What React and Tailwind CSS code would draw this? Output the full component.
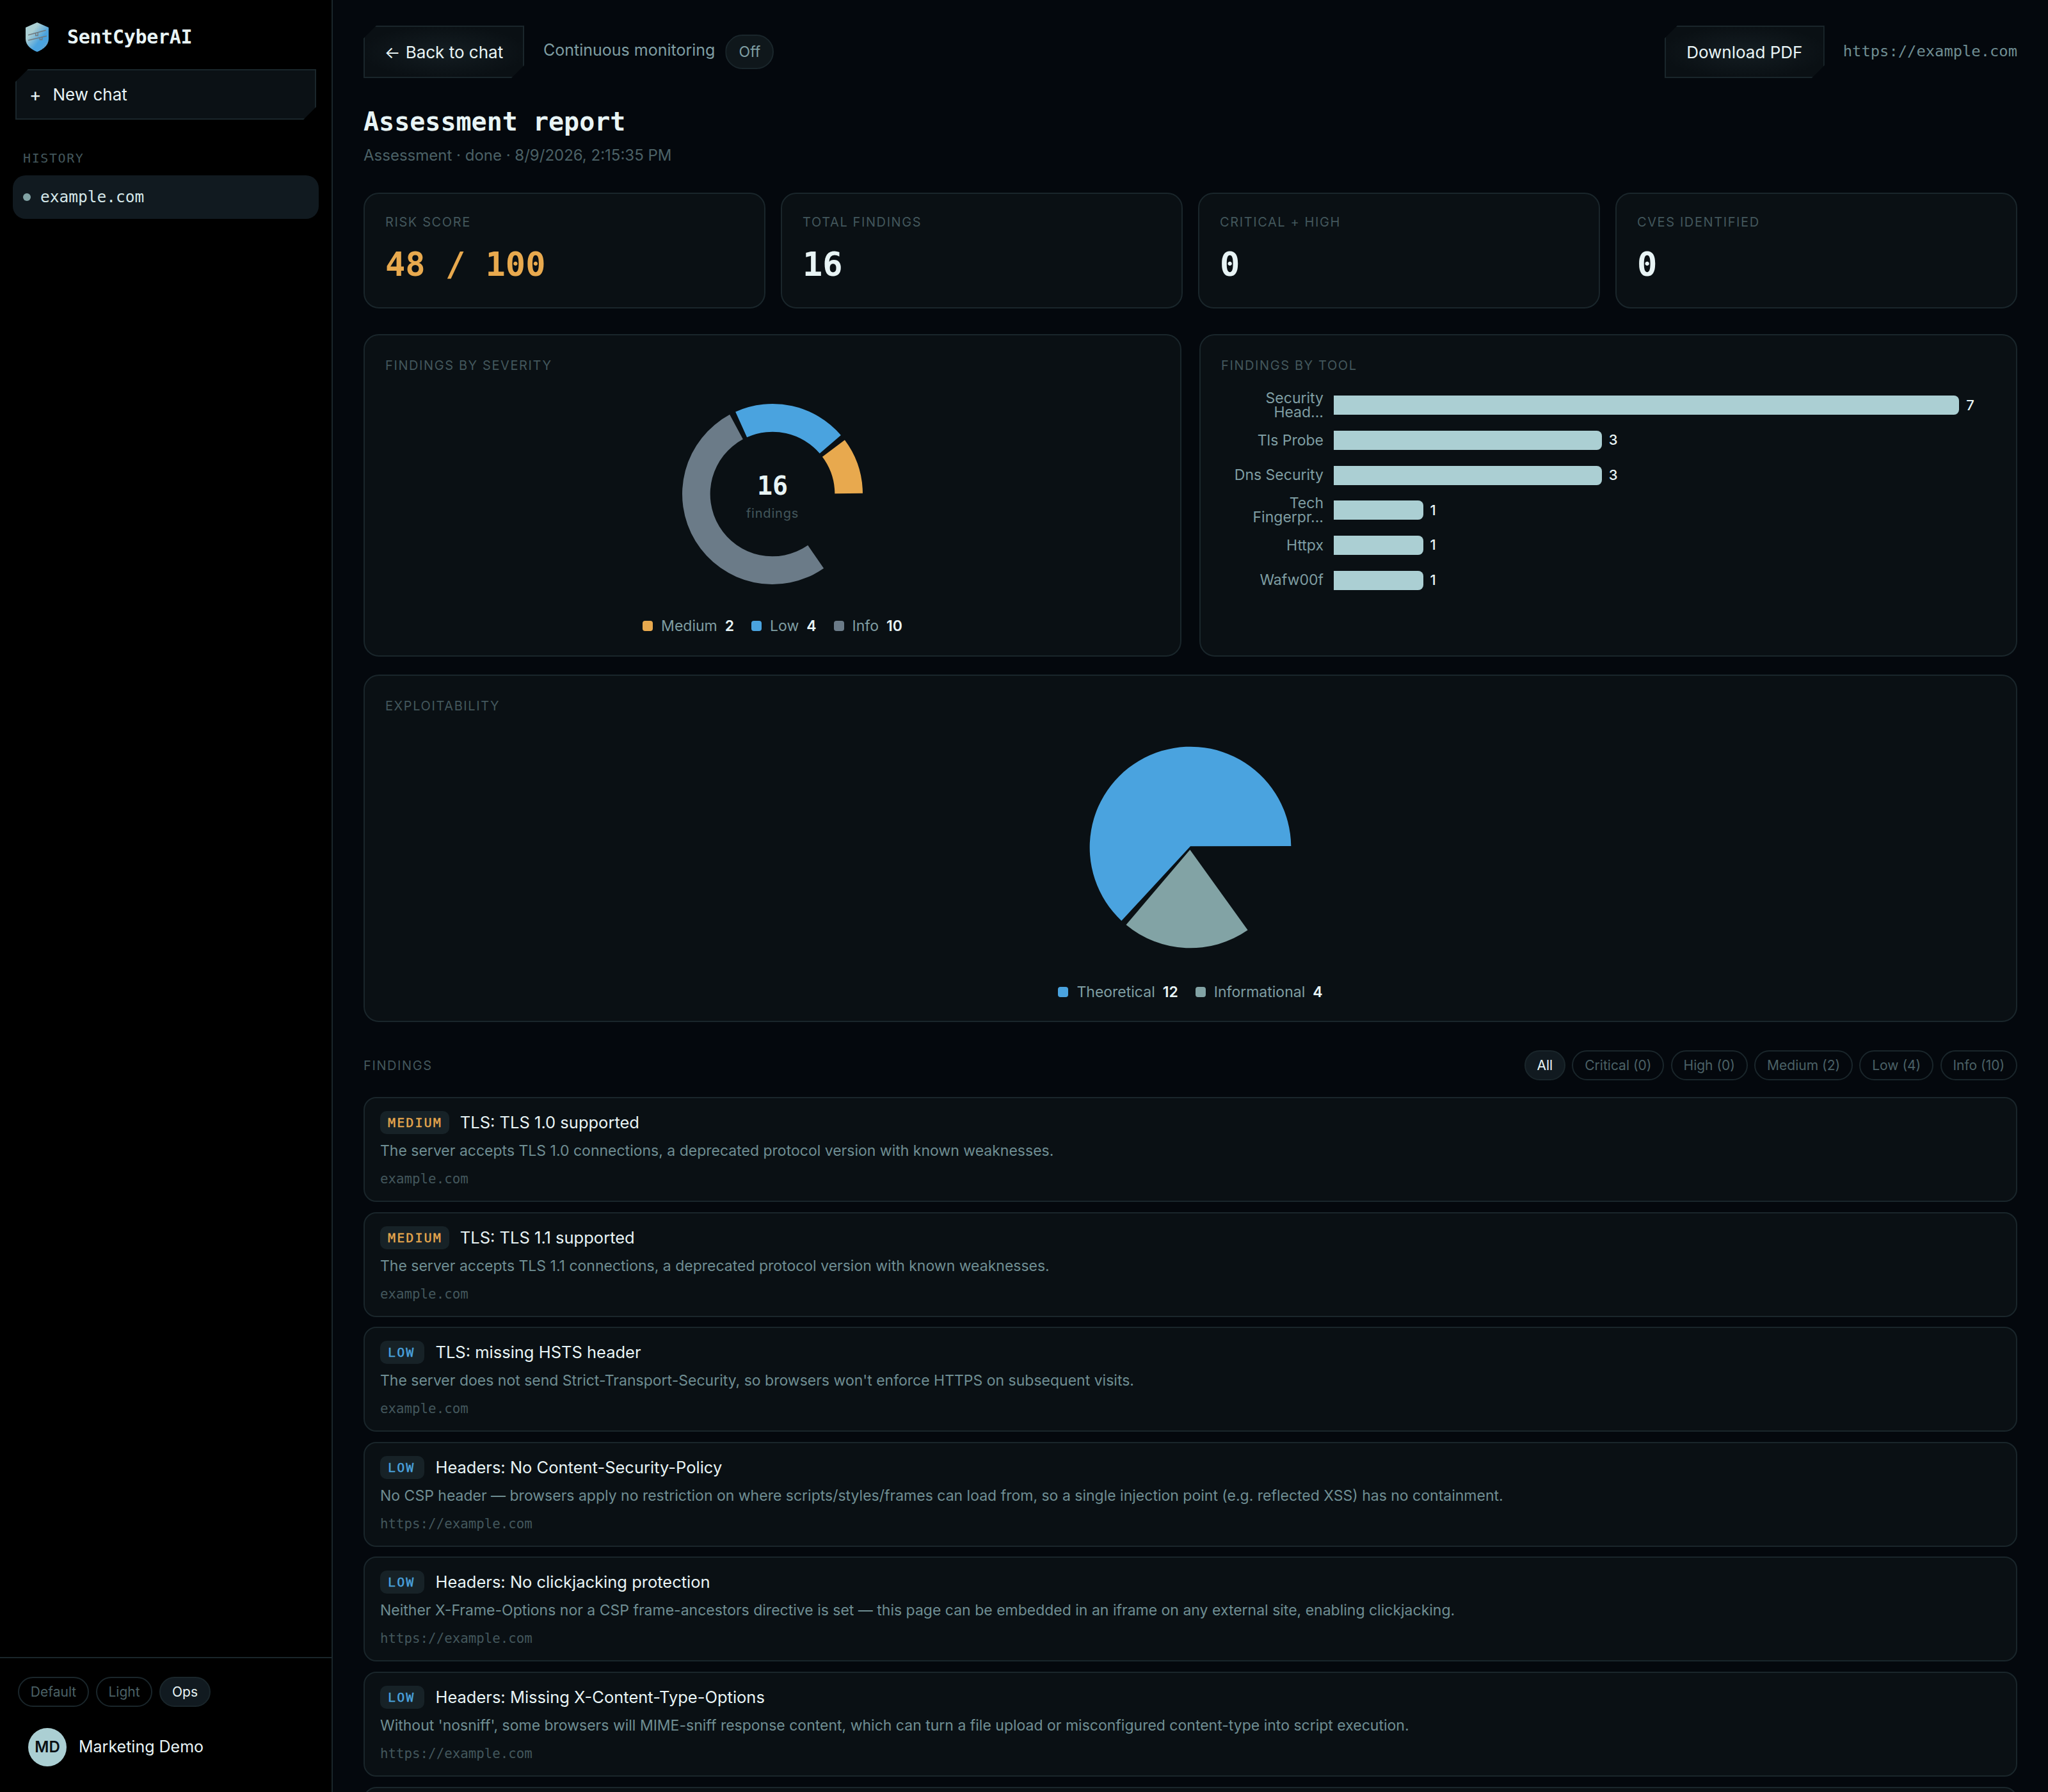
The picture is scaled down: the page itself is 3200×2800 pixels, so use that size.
const MONO = 'font-["DejaVu_Sans_Mono",monospace]'

const cutCorners =
  '[clip-path:polygon(20px_0,100%_0,100%_calc(100%-20px),calc(100%-20px)_100%,0_100%,0_20px)]'

const stats = [
  { label: 'Risk score', value: '48 / 100', color: 'text-[#e8a94e]' },
  { label: 'Total findings', value: '16', color: 'text-[#e8f4f5]' },
  { label: 'Critical + High', value: '0', color: 'text-[#e8f4f5]' },
  { label: 'CVEs identified', value: '0', color: 'text-[#e8f4f5]' },
]

const tools = [
  { name: 'Security Head...', count: 7 },
  { name: 'Tls Probe', count: 3 },
  { name: 'Dns Security', count: 3 },
  { name: 'Tech Fingerpr...', count: 1 },
  { name: 'Httpx', count: 1 },
  { name: 'Wafw00f', count: 1 },
]

const filters = ['All', 'Critical (0)', 'High (0)', 'Medium (2)', 'Low (4)', 'Info (10)']

const findings = [
  {
    severity: 'Medium',
    title: 'TLS: TLS 1.0 supported',
    body: 'The server accepts TLS 1.0 connections, a deprecated protocol version with known weaknesses.',
    target: 'example.com',
  },
  {
    severity: 'Medium',
    title: 'TLS: TLS 1.1 supported',
    body: 'The server accepts TLS 1.1 connections, a deprecated protocol version with known weaknesses.',
    target: 'example.com',
  },
  {
    severity: 'Low',
    title: 'TLS: missing HSTS header',
    body: "The server does not send Strict-Transport-Security, so browsers won't enforce HTTPS on subsequent visits.",
    target: 'example.com',
  },
  {
    severity: 'Low',
    title: 'Headers: No Content-Security-Policy',
    body: 'No CSP header — browsers apply no restriction on where scripts/styles/frames can load from, so a single injection point (e.g. reflected XSS) has no containment.',
    target: 'https://example.com',
  },
  {
    severity: 'Low',
    title: 'Headers: No clickjacking protection',
    body: 'Neither X-Frame-Options nor a CSP frame-ancestors directive is set — this page can be embedded in an iframe on any external site, enabling clickjacking.',
    target: 'https://example.com',
  },
  {
    severity: 'Low',
    title: 'Headers: Missing X-Content-Type-Options',
    body: "Without 'nosniff', some browsers will MIME-sniff response content, which can turn a file upload or misconfigured content-type into script execution.",
    target: 'https://example.com',
  },
]

// angle in degrees, counter-clockwise from 3 o'clock
function polar(cx, cy, r, deg) {
  const rad = (deg * Math.PI) / 180
  return `${(cx + r * Math.cos(rad)).toFixed(2)} ${(cy - r * Math.sin(rad)).toFixed(2)}`
}

function ringPath(cx, cy, outer, inner, from, to) {
  const large = to - from > 180 ? 1 : 0
  return [
    `M${polar(cx, cy, outer, from)}`,
    `A${outer} ${outer} 0 ${large} 0 ${polar(cx, cy, outer, to)}`,
    `L${polar(cx, cy, inner, to)}`,
    `A${inner} ${inner} 0 ${large} 1 ${polar(cx, cy, inner, from)}`,
    'Z',
  ].join('')
}

function piePath(cx, cy, r, from, to, apexX, apexY) {
  const large = to - from > 180 ? 1 : 0
  return `M${apexX} ${apexY}L${polar(cx, cy, r, from)}A${r} ${r} 0 ${large} 0 ${polar(cx, cy, r, to)}Z`
}

function ShieldLogo() {
  return (
    <svg width="36" height="46" viewBox="0 0 36 46" className="shrink-0">
      <defs>
        <linearGradient id="shield-fill" x1="0" y1="0" x2="1" y2="1">
          <stop offset="0.3" stopColor="#abcfd3" />
          <stop offset="0.62" stopColor="#4aa3df" />
        </linearGradient>
        <pattern id="shield-dots" width="3" height="3" patternUnits="userSpaceOnUse">
          <rect width="1.4" height="1.4" fill="#9aa7ad" />
        </pattern>
        <clipPath id="shield-clip">
          <path d="M18 0L36 8V26C36 36 26 43 18 46C10 43 0 36 0 26V8Z" />
        </clipPath>
      </defs>
      <path d="M18 0L36 8V26C36 36 26 43 18 46C10 43 0 36 0 26V8Z" fill="url(#shield-fill)" />
      <g clipPath="url(#shield-clip)">
        <path d="M20 46L36 26V46Z" fill="url(#shield-dots)" opacity="0.8" />
        <path d="M18 4L36 4V14L4 34V28Z" fill="url(#shield-dots)" opacity="0.25" />
      </g>
      <path
        d="M4 19.7L31.7 12.3M4 28L33 21.3M15.7 16.5V20.5H19.2V15.5M22.3 23V27H25.8V22"
        fill="none"
        stroke="#6f7a80"
        strokeWidth="1.4"
      />
    </svg>
  )
}

function Sidebar() {
  return (
    <aside className="flex h-full w-[520px] shrink-0 flex-col border-r-2 border-[#1a262b] bg-black">
      <div className="mt-[35px] flex h-[46px] items-center gap-[29px] pl-[40px]">
        <ShieldLogo />
        <span className={`${MONO} text-[30px] font-bold leading-none tracking-[-0.3px] text-[#e8f4f5]`}>
          SentCyberAI
        </span>
      </div>
      <div className={`ml-[24px] mt-[27px] flex h-[79px] w-[470px] items-center gap-[18px] border-2 border-[#1a262b] bg-[#0b1115] pl-[20px] text-[26px] text-[#e8f4f5] ${cutCorners}`}>
        <span className="text-[28px] leading-none">+</span>
        <span>New chat</span>
      </div>
      <div className={`${MONO} ml-[36px] mt-[48px] text-[20px] leading-[24px] tracking-[1.6px] text-[#43575c]`}>
        HISTORY
      </div>
      <div className="ml-[20px] mt-[15px] flex h-[68px] w-[478px] items-center gap-[15px] rounded-[20px] bg-[#111a20] pl-[16px]">
        <span className="h-[12px] w-[12px] rounded-full bg-[#82a3a5]" />
        <span className={`${MONO} text-[24.5px] text-[#d4e6e8]`}>example.com</span>
      </div>
      <div className="mt-auto border-t-2 border-[#1a262b] pb-[40px] pl-[28px] pt-[29px]">
        <div className="flex gap-[11px]">
          <span className="flex h-[47px] w-[111px] items-center justify-center rounded-full border-2 border-[#1a262b] text-[21px] text-[#4b6166]">
            Default
          </span>
          <span className="flex h-[47px] w-[88px] items-center justify-center rounded-full border-2 border-[#1a262b] text-[21px] text-[#4b6166]">
            Light
          </span>
          <span className="flex h-[47px] w-[80px] items-center justify-center rounded-full border-2 border-[#1a262b] bg-[#111a20] text-[21px] text-[#e8f4f5]">
            Ops
          </span>
        </div>
        <div className="ml-[16px] mt-[33px] flex items-center gap-[19px]">
          <span className="flex h-[60px] w-[60px] items-center justify-center rounded-full bg-[#abcfd3] text-[24px] font-semibold text-[#0a1014]">
            MD
          </span>
          <span className="text-[25px] text-[#e8f4f5]">Marketing Demo</span>
        </div>
      </div>
    </aside>
  )
}

function Label({ children }) {
  return (
    <div className="text-[20px] uppercase leading-[28px] tracking-[1.6px] text-[#43575c]">{children}</div>
  )
}

function LegendItem({ color, label, count }) {
  return (
    <div className="flex items-center">
      <span className={`mr-[13px] h-[16px] w-[16px] rounded-[4px] ${color}`} />
      <span className="mr-[12px] text-[#7f9ea3]">{label}</span>
      <span className="font-semibold text-[#e8f4f5]">{count}</span>
    </div>
  )
}

function SeverityCard() {
  return (
    <section className="h-[504px] rounded-[24px] border-2 border-[#1a262b] bg-[#0a1014] px-[32px] pt-[33px]">
      <Label>Findings by severity</Label>
      <div className="relative mx-auto mt-[37px] h-[300px] w-[300px]">
        <svg width="300" height="300" viewBox="291 95 900 900">
          <path d={ringPath(741, 545, 423, 292, 0.5, 36.8)} fill="#e8a94e" />
          <path d={ringPath(741, 545, 423, 292, 40.7, 114.2)} fill="#4aa3df" />
          <path d={ringPath(741, 545, 423, 292, 118.3, 304.6)} fill="#6b7b88" />
        </svg>
        <div className="absolute inset-x-0 top-[114px] flex flex-col items-center">
          <span className={`${MONO} text-[40px] font-bold leading-[46px] text-[#e8f4f5]`}>16</span>
          <span className="mt-[7px] text-[20px] leading-[26px] tracking-[0.8px] text-[#43575c]">findings</span>
        </div>
      </div>
      <div className="mt-[40px] flex justify-center gap-[27px] text-[23px] leading-[32px]">
        <LegendItem color="bg-[#e8a94e]" label="Medium" count="2" />
        <LegendItem color="bg-[#4aa3df]" label="Low" count="4" />
        <LegendItem color="bg-[#6b7b88]" label="Info" count="10" />
      </div>
    </section>
  )
}

function ToolCard() {
  return (
    <section className="h-[504px] rounded-[24px] border-2 border-[#1a262b] bg-[#0a1014] px-[32px] pt-[33px]">
      <Label>Findings by tool</Label>
      <div className="mt-[21px] flex flex-col">
        {tools.map((tool) => (
          <div key={tool.name} className="flex h-[54.67px] items-center gap-[16px]">
            <div className="w-[160px] shrink-0 text-right text-[23px] leading-[22.5px] text-[#7f9ea3]">
              {tool.name}
            </div>
            <div
              className="h-[30px] rounded-r-[8px] bg-[#abcfd3]"
              style={{ width: `${tool.count * 139.6}px` }}
            />
            <span className="-ml-[5px] text-[22px] font-medium text-[#e8f4f5]">{tool.count}</span>
          </div>
        ))}
      </div>
    </section>
  )
}

function ExploitabilityCard() {
  return (
    <section className="mt-[28px] h-[543px] rounded-[24px] border-2 border-[#1a262b] bg-[#0a1014] px-[32px] pt-[33px]">
      <Label>Exploitability</Label>
      <svg width="320" height="320" viewBox="180 71.5 960 960" className="mx-auto mt-[47px] block">
        <path d={piePath(660, 551.5, 472, 0.7, 226.8, 660, 546)} fill="#4aa3df" />
        <path d={piePath(660, 551.5, 472, 230.3, 304.7, 658, 563)} fill="#82a3a5" />
      </svg>
      <div className="mt-[50px] flex justify-center gap-[27px] text-[23px] leading-[32px]">
        <LegendItem color="bg-[#4aa3df]" label="Theoretical" count="12" />
        <LegendItem color="bg-[#82a3a5]" label="Informational" count="4" />
      </div>
    </section>
  )
}

function SeverityBadge({ severity }) {
  const tone = severity === 'Medium' ? 'pr-[11px] text-[#e8a94e]' : 'pr-[15px] text-[#4aa3df]'
  return (
    <span className={`${MONO} flex h-[36px] items-center rounded-[10px] bg-[#172227] pl-[12px] text-[20px] uppercase leading-none tracking-[2.1px] [-webkit-text-stroke:0.4px_currentColor] ${tone}`}>
      {severity}
    </span>
  )
}

function FindingCard({ finding }) {
  return (
    <article className="h-[164px] shrink-0 rounded-[20px] border-2 border-[#1a262b] bg-[#0a1014] px-[24px] pt-[20px]">
      <div className="flex items-center gap-[17px]">
        <SeverityBadge severity={finding.severity} />
        <h3 className="text-[25.5px] font-normal leading-[36px] text-[#e8f4f5]">{finding.title}</h3>
      </div>
      <p className="mt-[10px] text-[23px] leading-[32px] text-[#6f8e93]">{finding.body}</p>
      <div className={`${MONO} mt-[15px] text-[20.8px] leading-[26px] text-[#43575c]`}>{finding.target}</div>
    </article>
  )
}

function App() {
  return (
    <div className="flex h-screen overflow-hidden bg-[#04080d] font-['Inter',sans-serif]">
      <Sidebar />
      <main className="min-w-0 flex-1 px-[48px] pt-[40px]">
        <div className="flex h-[82px] items-center">
          <button
            type="button"
            className={`flex h-[82px] w-[251px] items-center justify-center gap-[8px] border-2 border-[#1a262b] bg-[radial-gradient(ellipse_at_center,#141d22,#0a1014_75%)] text-[26px] text-[#e8f4f5] ${cutCorners}`}
          >
            <span>←</span>
            <span>Back to chat</span>
          </button>
          <span className="ml-[30px] -translate-y-[2px] text-[25px] text-[#7f9ea3]">Continuous monitoring</span>
          <span className="ml-[16px] flex h-[54px] w-[76px] items-center justify-center rounded-full border-2 border-[#1a262b] bg-[#0f171b] text-[23px] text-[#7f9ea3] [clip-path:polygon(16px_0,100%_0,100%_calc(100%-16px),calc(100%-16px)_100%,0_100%,0_16px)]">
            Off
          </span>
          <button
            type="button"
            className={`ml-auto flex h-[82px] w-[250px] items-center justify-center border-2 border-[#1a262b] bg-[radial-gradient(ellipse_at_center,#141d22,#0a1014_75%)] text-[26px] text-[#e8f4f5] ${cutCorners}`}
          >
            Download PDF
          </button>
          <span className={`${MONO} ml-[29px] text-[23.8px] text-[#6f8e93]`}>https://example.com</span>
        </div>

        <h1 className={`${MONO} mt-[42px] text-[40px] font-bold leading-[52px] text-[#e8f4f5]`}>
          Assessment report
        </h1>
        <p className="mt-[11px] text-[24px] leading-[32px] text-[#4b6166]">
          Assessment · done · 8/9/2026, 2:15:35 PM
        </p>

        <div className="mt-[42px] grid grid-cols-4 gap-[24px]">
          {stats.map((stat) => (
            <div
              key={stat.label}
              className="h-[181px] rounded-[24px] border-2 border-[#1a262b] bg-[#0a1014] px-[32px] pt-[30px]"
            >
              <Label>{stat.label}</Label>
              <div className={`${MONO} mt-[18px] text-[52px] font-bold leading-[68px] ${stat.color}`}>
                {stat.value}
              </div>
            </div>
          ))}
        </div>

        <div className="mt-[40px] grid grid-cols-2 gap-[28px]">
          <SeverityCard />
          <ToolCard />
        </div>
        <ExploitabilityCard />

        <div className="mt-[44px] flex items-center justify-between">
          <Label>Findings</Label>
          <div className="flex gap-[10.5px]">
            {filters.map((filter, i) => (
              <span
                key={filter}
                className={
                  i === 0
                    ? 'flex h-[47px] items-center rounded-full border-2 border-[#1a262b] bg-[#111a20] px-[17.8px] text-[21px] text-[#e8f4f5]'
                    : 'flex h-[47px] items-center rounded-full border-2 border-[#1a262b] px-[17.8px] text-[21px] text-[#4b6166]'
                }
              >
                {filter}
              </span>
            ))}
          </div>
        </div>

        <div className="mt-[26px] flex flex-col gap-[15.6px]">
          {findings.map((finding) => (
            <FindingCard key={finding.title} finding={finding} />
          ))}
          <article className="h-[164px] shrink-0 rounded-[20px] border-2 border-[#1a262b] bg-[#0a1014]" />
        </div>
      </main>
    </div>
  )
}

export default App
